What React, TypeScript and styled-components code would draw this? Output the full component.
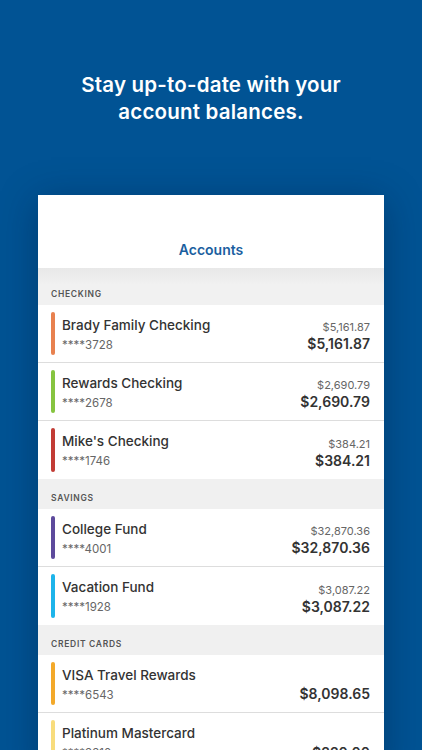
import * as React from "react"
import styled, { createGlobalStyle } from "styled-components"

const GlobalStyle = createGlobalStyle`
  html, body {
    margin: 0;
    padding: 0;
    background: #015394;
    overflow: hidden;
  }
  body {
    font-family: Inter, "Noto Sans", "Liberation Sans", sans-serif;
    -webkit-font-smoothing: antialiased;
  }
`

const Page = styled.div`
  height: 750px;
  display: flex;
  flex-direction: column;
  align-items: center;
  padding-top: 71px;
  box-sizing: border-box;
  overflow: hidden;
`

const Headline = styled.h1`
  margin: 0;
  font-size: 20.5px;
  line-height: 27px;
  font-weight: 600;
  color: #ffffff;
  text-align: center;
  letter-spacing: 0.2px;
`

const Card = styled.div`
  margin-top: 70px;
  width: 346px;
  background: #ffffff;
  box-shadow: 0 6px 36px rgba(0, 20, 50, 0.35);
  flex-shrink: 0;
`

const CardHeader = styled.div`
  height: 73px;
  display: flex;
  align-items: flex-end;
  justify-content: center;
  padding-bottom: 10px;
  box-sizing: border-box;
`

const CardTitle = styled.div`
  font-size: 14px;
  font-weight: 600;
  color: #1b5f9f;
`

const SectionHeader = styled.div<{ $top: number; $shade?: boolean }>`
  padding: ${(p) => p.$top}px 13px 5px;
  background: ${(p) =>
    p.$shade ? "linear-gradient(#e8e8e8, #f1f1f1 45%)" : "#f0f0f0"};
  font-size: 8.5px;
  font-weight: 600;
  letter-spacing: 0.7px;
  color: #555555;
  line-height: 12px;
`

const Row = styled.div`
  height: 58px;
  display: flex;
  align-items: stretch;
  padding: 7px 14px 7px 13px;
  box-sizing: border-box;
  border-bottom: 1px solid #dddddd;
  &:last-child {
    border-bottom: none;
  }
`

const ColorBar = styled.div<{ $color: string }>`
  width: 4px;
  border-radius: 2px;
  background: ${(p) => p.$color};
  flex-shrink: 0;
`

const Info = styled.div`
  flex: 1;
  display: flex;
  flex-direction: column;
  padding-left: 7px;
  padding-top: 4px;
`

const Name = styled.div`
  font-size: 13.5px;
  font-weight: 500;
  color: #333333;
  line-height: 18px;
`

const Mask = styled.div`
  margin-top: 4px;
  font-size: 11.5px;
  color: #666666;
  line-height: 15px;
`

const Amounts = styled.div`
  display: flex;
  flex-direction: column;
  align-items: flex-end;
  justify-content: flex-end;
  padding-bottom: 1px;
`

const Available = styled.div`
  font-size: 11px;
  color: #666666;
  line-height: 14px;
`

const Balance = styled.div`
  font-size: 14px;
  font-weight: 600;
  color: #333333;
  line-height: 20px;
`

type Account = {
  name: string
  mask: string
  color: string
  available?: string
  balance: string
}

const sections: { title: string; accounts: Account[] }[] = [
  {
    title: "CHECKING",
    accounts: [
      { name: "Brady Family Checking", mask: "****3728", color: "#e8814f", available: "$5,161.87", balance: "$5,161.87" },
      { name: "Rewards Checking", mask: "****2678", color: "#86c440", available: "$2,690.79", balance: "$2,690.79" },
      { name: "Mike's Checking", mask: "****1746", color: "#c23b35", available: "$384.21", balance: "$384.21" },
    ],
  },
  {
    title: "SAVINGS",
    accounts: [
      { name: "College Fund", mask: "****4001", color: "#5d4a9c", available: "$32,870.36", balance: "$32,870.36" },
      { name: "Vacation Fund", mask: "****1928", color: "#1db4ea", available: "$3,087.22", balance: "$3,087.22" },
    ],
  },
  {
    title: "CREDIT CARDS",
    accounts: [
      { name: "VISA Travel Rewards", mask: "****6543", color: "#f3a92a", balance: "$8,098.65" },
      { name: "Platinum Mastercard", mask: "****3310", color: "#f8dc7c", balance: "$220.00" },
    ],
  },
]

function AccountRow({ account }: { account: Account }) {
  return (
    <Row>
      <ColorBar $color={account.color} />
      <Info>
        <Name>{account.name}</Name>
        <Mask>{account.mask}</Mask>
      </Info>
      <Amounts>
        {account.available ? <Available>{account.available}</Available> : null}
        <Balance>{account.balance}</Balance>
      </Amounts>
    </Row>
  )
}

export default function App() {
  return (
    <>
      <GlobalStyle />
      <Page>
        <Headline>
          Stay up-to-date with your
          <br />
          account balances.
        </Headline>
        <Card>
          <CardHeader>
            <CardTitle>Accounts</CardTitle>
          </CardHeader>
          {sections.map((section, i) => (
            <div key={section.title}>
              <SectionHeader $top={i === 0 ? 20 : 13} $shade={i === 0}>
                {section.title}
              </SectionHeader>
              {section.accounts.map((account) => (
                <AccountRow key={account.mask} account={account} />
              ))}
            </div>
          ))}
        </Card>
      </Page>
    </>
  )
}
